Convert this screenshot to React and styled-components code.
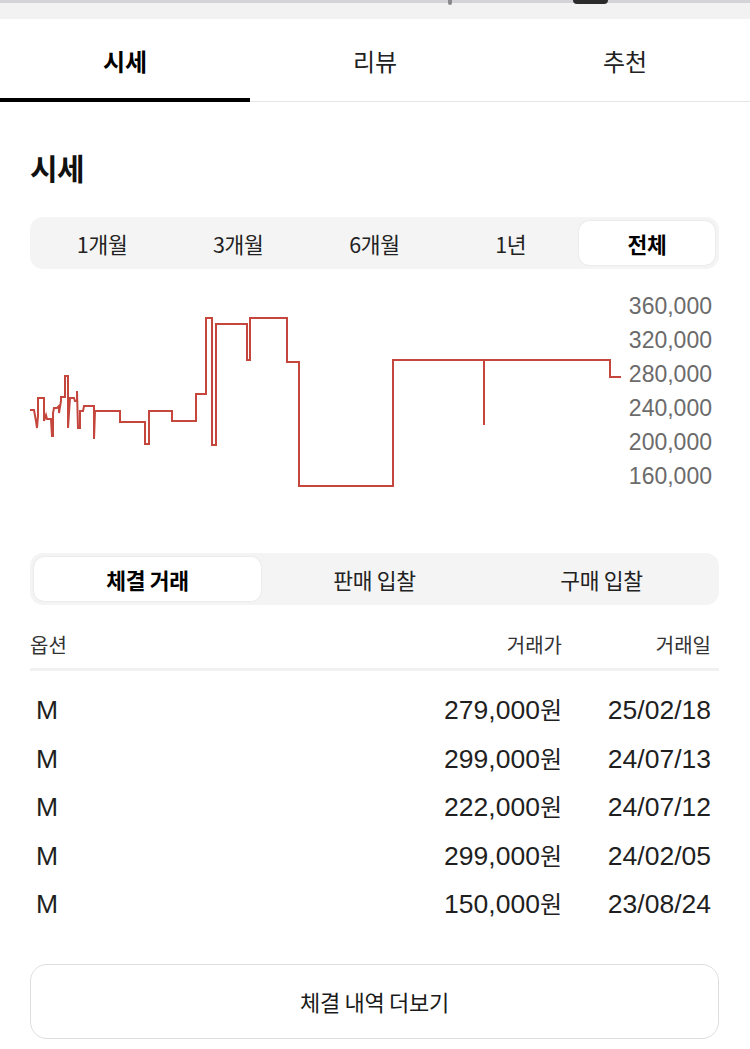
import React from "react";
import styled, { createGlobalStyle } from "styled-components";

const Global = createGlobalStyle`
  html, body { margin: 0; padding: 0; background: #fff; }
  body { font-family: "Liberation Sans", "Noto Sans CJK KR", sans-serif; color: #1f1f1f; }
  * { box-sizing: border-box; }
`;

const Page = styled.div`
  width: 750px;
  min-height: 1049px;
  background: #fff;
  overflow: hidden;
`;

const TopStrip = styled.div`
  height: 19px;
  background: #f2f2f2;
  border-top: 3px solid #d4d4d8;
  display: flex;
`;

const StripMark = styled.div`
  margin-left: ${(p) => p.$left}px;
  margin-top: -3px;
  width: ${(p) => p.$w}px;
  height: ${(p) => p.$h}px;
  background: ${(p) => p.$c};
  border-radius: 0 0 6px 6px;
`;

const TabBar = styled.div`
  display: flex;
  height: 83px;
  border-bottom: 1px solid #e6e6e6;
`;

const Tab = styled.div`
  flex: 1;
  display: flex;
  align-items: center;
  justify-content: center;
  font-family: "Noto Sans CJK KR", sans-serif;
  font-size: 24px;
  font-weight: ${(p) => (p.$active ? 700 : 400)};
  color: ${(p) => (p.$active ? "#000" : "#222")};
  border-bottom: 4px solid ${(p) => (p.$active ? "#000" : "transparent")};
  margin-bottom: -1px;
  padding-top: 3px;
`;

const Section = styled.div`
  padding: 0 31px 0 30px;
`;

const Heading = styled.h2`
  margin: 45px 0 0;
  height: 40px;
  line-height: 40px;
  font-family: "Noto Sans CJK KR", sans-serif;
  font-size: 30px;
  font-weight: 700;
  color: #111;
  letter-spacing: -0.5px;
`;

const Segmented = styled.div`
  margin-top: ${(p) => p.$mt}px;
  height: 52px;
  background: #f4f4f4;
  border-radius: 13px;
  padding: 4px;
  display: grid;
  grid-template-columns: repeat(${(p) => p.$count}, 1fr);
`;

const SegItem = styled.div`
  display: flex;
  align-items: center;
  justify-content: center;
  border-radius: 10px;
  font-family: "Noto Sans CJK KR", sans-serif;
  font-size: 21.5px;
  font-weight: ${(p) => (p.$active ? 700 : 400)};
  color: ${(p) => (p.$active ? "#000" : "#222")};
  background: ${(p) => (p.$active ? "#fff" : "transparent")};
  box-shadow: ${(p) => (p.$active ? "0 0 2px rgba(0,0,0,0.12)" : "none")};
  letter-spacing: -0.3px;
`;

const ChartWrap = styled.div`
  margin-top: 20px;
  height: 212px;
  display: flex;
`;

const Plot = styled.svg`
  width: 592px;
  height: 212px;
  flex: none;
  display: block;
`;

const Axis = styled.div`
  flex: 1;
  display: flex;
  flex-direction: column;
  align-items: flex-end;
  padding-right: 7px;
`;

const AxisLabel = styled.div`
  height: 34px;
  line-height: 34px;
  font-family: "Liberation Sans", sans-serif;
  font-size: 23px;
  color: #6b6b6b;
`;

const Table = styled.div`
  margin-top: 16px;
  padding-right: 8px;
`;

const HeaderRow = styled.div`
  display: flex;
  align-items: center;
  height: 50px;
  border-bottom: 3px solid #f1f1f1;
  margin-right: -8px;
  padding-right: 8px;
  font-family: "Noto Sans CJK KR", sans-serif;
  font-size: 20px;
  color: #333;
`;

const Rows = styled.div`
  padding-top: 15px;
`;

const Row = styled.div`
  display: flex;
  align-items: baseline;
  height: 48.5px;
  line-height: 48.5px;
  padding-left: 6px;
  font-family: "Liberation Sans", "Noto Sans CJK KR", sans-serif;
  font-size: 26.5px;
  color: #1f1f1f;
`;

const OptionCell = styled.div`
  flex: 1;
`;

const PriceCell = styled.div`
  width: 300px;
  text-align: right;
`;

const Won = styled.span`
  font-family: "Noto Sans CJK KR", sans-serif;
  font-size: 24px;
  line-height: 1;
`;

const DateCell = styled.div`
  width: 149px;
  text-align: right;
`;

const MoreButton = styled.button`
  margin-top: 35px;
  width: 100%;
  height: 75px;
  border: 1.5px solid #dedede;
  border-radius: 17px;
  background: #fff;
  font-family: "Noto Sans CJK KR", sans-serif;
  font-size: 22px;
  color: #1a1a1a;
  letter-spacing: -0.3px;
`;

const periods = ["1개월", "3개월", "6개월", "1년", "전체"];
const tradeTabs = ["체결 거래", "판매 입찰", "구매 입찰"];
const axis = ["360,000", "320,000", "280,000", "240,000", "200,000", "160,000"];
const trades = [
  ["M", "279,000", "25/02/18"],
  ["M", "299,000", "24/07/13"],
  ["M", "222,000", "24/07/12"],
  ["M", "299,000", "24/02/05"],
  ["M", "150,000", "23/08/24"],
];

const pricePath =
  "M30,409 H34 L36,420 L37,427 L38,415 V397 H44 V420 L46,414 L47,418 H51 L52,435 H53 V412 L54,407 H57 L59,405 V412 L61,400 V396 H65 V375 H68 V427 L70,397 H74 L75,400 H77 V390 L78,427 H80 V410 H83 L84,405 H94 V438 L95,410 H120 V421 H145 V443 H149 V410 H172 V420 H196 V393 H206 V317 H212 V444 H216 V323 H247 V359 H250 V317 H287 V361 H299 V485 H393 V359 H484 V424 V359 H610 V376 H621";

export default function App() {
  return (
    <Page>
      <Global />
      <TopStrip>
        <StripMark $left={448} $w={4} $h={5} $c="#8a8a8a" />
        <StripMark $left={121} $w={35} $h={4} $c="#2b2b2b" />
      </TopStrip>
      <TabBar>
        <Tab $active>시세</Tab>
        <Tab>리뷰</Tab>
        <Tab>추천</Tab>
      </TabBar>
      <Section>
        <Heading>시세</Heading>
        <Segmented $mt={30} $count={5}>
          {periods.map((p) => (
            <SegItem key={p} $active={p === "전체"}>
              {p}
            </SegItem>
          ))}
        </Segmented>
        <ChartWrap>
          <Plot viewBox="0 0 592 212">
            <g transform="translate(-30,-288)">
              <path
                d={pricePath}
                fill="none"
                stroke="#c4463c"
                strokeWidth="2"
                strokeLinejoin="miter"
              />
            </g>
          </Plot>
          <Axis>
            {axis.map((a) => (
              <AxisLabel key={a}>{a}</AxisLabel>
            ))}
          </Axis>
        </ChartWrap>
        <Segmented $mt={52} $count={3}>
          {tradeTabs.map((t, i) => (
            <SegItem key={t} $active={i === 0}>
              {t}
            </SegItem>
          ))}
        </Segmented>
        <Table>
          <HeaderRow>
            <OptionCell>옵션</OptionCell>
            <PriceCell>거래가</PriceCell>
            <DateCell>거래일</DateCell>
          </HeaderRow>
          <Rows>
            {trades.map(([o, p, d], i) => (
              <Row key={i}>
                <OptionCell>{o}</OptionCell>
                <PriceCell>
                  {p}
                  <Won>원</Won>
                </PriceCell>
                <DateCell>{d}</DateCell>
              </Row>
            ))}
          </Rows>
        </Table>
        <MoreButton>체결 내역 더보기</MoreButton>
      </Section>
    </Page>
  );
}
